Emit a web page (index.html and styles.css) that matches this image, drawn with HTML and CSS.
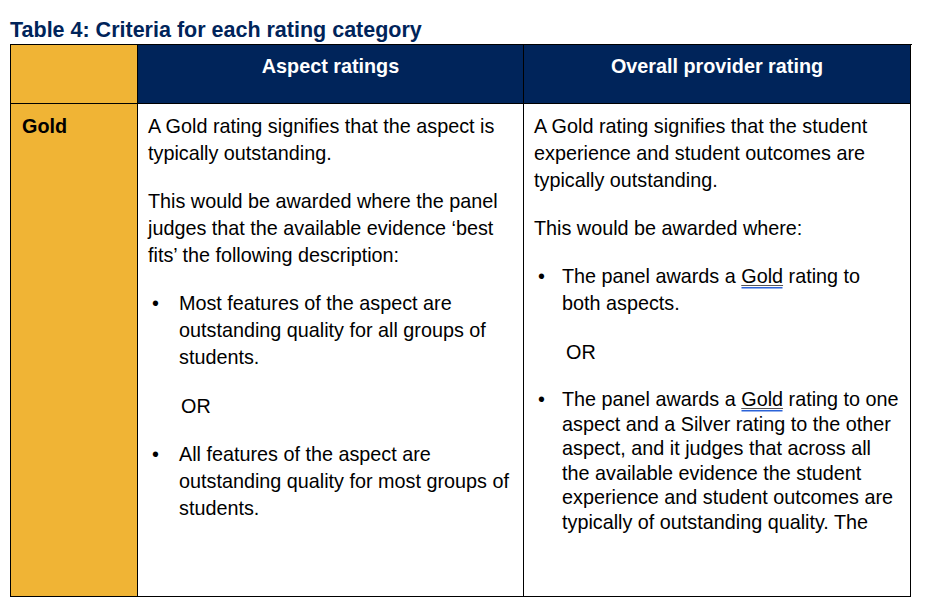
FILE: index.html
```html
<!DOCTYPE html>
<html>
<head>
<meta charset="utf-8">
<link rel="stylesheet" href="styles.css">
</head>
<body>
<h1 class="title">Table 4: Criteria for each rating category</h1>
<div class="table">
  <div class="cell head gold-col"></div>
  <div class="cell head">Aspect ratings</div>
  <div class="cell head last">Overall provider rating</div>

  <div class="cell gold-col label">Gold</div>
  <div class="cell body">
    <p>A Gold rating signifies that the aspect is typically outstanding.</p>
    <p>This would be awarded where the panel judges that the available evidence ‘best fits’ the following description:</p>
    <div class="bullet b-left"><span class="dot">•</span><span class="btext">Most features of the aspect are outstanding quality for all groups of students.</span></div>
    <p class="or or-left">OR</p>
    <div class="bullet b-left"><span class="dot">•</span><span class="btext">All features of the aspect are outstanding quality for most groups of students.</span></div>
  </div>
  <div class="cell body last">
    <p>A Gold rating signifies that the student experience and student outcomes are typically outstanding.</p>
    <p>This would be awarded where:</p>
    <div class="bullet b-right"><span class="dot">•</span><span class="btext">The panel awards a <span class="spell">Gold</span> rating to both aspects.</span></div>
    <p class="or or-right">OR</p>
    <div class="bullet b-right tight"><span class="dot">•</span><span class="btext">The panel awards a <span class="spell">Gold</span> rating to one aspect and a Silver rating to the other aspect, and it judges that across all the available evidence the student experience and student outcomes are typically of outstanding quality. The</span></div>
  </div>
</div>
</body>
</html>
```

FILE: styles.css
```css
html, body {
  margin: 0;
  padding: 0;
  background: #ffffff;
}
body {
  font-family: "Liberation Sans", Arial, sans-serif;
  color: #000000;
}
.title {
  margin: 0;
  padding: 17px 0 0 10px;
  height: 44px;
  box-sizing: border-box;
  font-size: 21.5px;
  line-height: 26px;
  font-weight: bold;
  color: #00245a;
  white-space: nowrap;
}
.table {
  margin-left: 10px;
  width: 901px;
  display: grid;
  grid-template-columns: 127px 386px 387px;
  grid-template-rows: 59px 493px;
  border-top: 1px solid #000;
  border-left: 1px solid #000;
}
.cell {
  border-right: 1px solid #000;
  border-bottom: 1px solid #000;
  box-sizing: border-box;
  overflow: hidden;
}
.head {
  background: #00245a;
  color: #ffffff;
  font-weight: bold;
  font-size: 19.8px;
  line-height: 24px;
  text-align: center;
  padding-top: 9px;
}
.gold-col {
  background: #f0b435;
}
.label {
  font-weight: bold;
  font-size: 19.8px;
  line-height: 27px;
  padding: 9px 0 0 11px;
}
.body {
  font-size: 19.8px;
  line-height: 27px;
  padding: 9px 8px 0 10px;
}
.body p {
  margin: 0 0 21px 0;
}
.bullet {
  display: flex;
  margin-bottom: 22px;
}
.dot {
  flex: none;
}
.b-left .dot {
  width: 31px;
  padding-left: 4px;
  box-sizing: border-box;
}
.b-right .dot {
  width: 28px;
  padding-left: 4px;
  box-sizing: border-box;
}
.or-left {
  padding-left: 33px;
}
.or-right {
  padding-left: 32px;
}
.tight {
  line-height: 24.6px;
}
.spell {
  text-decoration: underline;
  text-decoration-color: #555;
  text-decoration-thickness: 1px;
  text-underline-offset: 2px;
  box-shadow: 0 2px 0 -0.5px #2b63d9;
}
```
